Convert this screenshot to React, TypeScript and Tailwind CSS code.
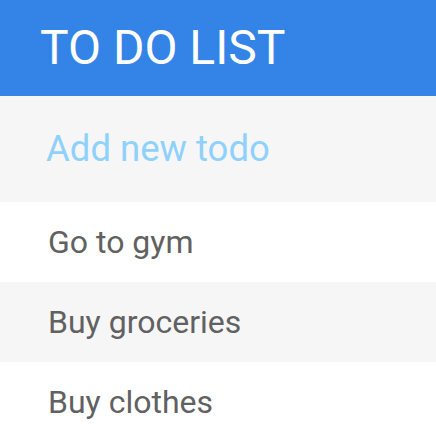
export default function App() {
  const items = ["Go to gym", "Buy groceries", "Buy clothes"];
  return (
    <div className="w-[436px] h-[436px] overflow-hidden bg-white" style={{ fontFamily: "Roboto, sans-serif" }}>
      <div className="h-[96px] bg-[#3384e6] flex items-center pl-[40px]">
        <h1 className="text-[48px] leading-none text-white font-normal">TO DO LIST</h1>
      </div>
      <div className="h-[106px] bg-[#f6f6f6] flex items-center pl-[46px]">
        <span className="text-[36.5px] leading-none text-[#8fd1fb]">Add new todo</span>
      </div>
      {items.map((t, i) => (
        <div
          key={t}
          className={`h-[80px] flex items-center pl-[48px] ${i % 2 === 1 ? "bg-[#f6f6f6]" : "bg-white"}`}
        >
          <span className="text-[32px] leading-none text-[#616161]">{t}</span>
        </div>
      ))}
    </div>
  );
}
